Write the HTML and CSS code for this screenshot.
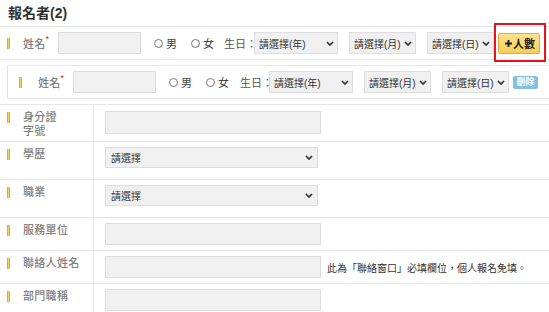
FILE: index.html
```html
<!DOCTYPE html>
<html lang="zh-Hant">
<head>
  <meta charset="UTF-8" />
  <title>報名者</title>
  <meta name="viewport" content="width=device-width, initial-scale=1.0" />
  <link rel="stylesheet" href="styles.css">
</head>
<body>

  <!-- 標題 -->
  <h2 class="section-title">報名者(2)</h2>

  <!-- 第一位報名者 -->
  <div class="person-row">
    <span class="bar"></span>
    <label class="person-label">姓名<em>*</em></label>
    <input class="text-input name-input" type="text">
    <span class="radio"><i></i>男</span>
    <span class="radio"><i></i>女</span>
    <span class="birth-label">生日：</span>
    <div class="fake-select sel-year">請選擇(年)<svg width="8" height="5" viewBox="0 0 8 5"><path d="M1 1 L4 4 L7 1" /></svg></div>
    <div class="fake-select sel-month">請選擇(月)<svg width="8" height="5" viewBox="0 0 8 5"><path d="M1 1 L4 4 L7 1" /></svg></div>
    <div class="fake-select sel-day">請選擇(日)<svg width="8" height="5" viewBox="0 0 8 5"><path d="M1 1 L4 4 L7 1" /></svg></div>
    <span class="add-wrap">
      <button class="add-btn" type="button"><svg width="7" height="7" viewBox="0 0 7 7"><path d="M3.5 0 V7 M0 3.5 H7" /></svg>人數</button>
      <span class="highlight-box"></span>
    </span>
  </div>

  <!-- 第二位報名者 -->
  <div class="person-row extra">
    <span class="bar"></span>
    <label class="person-label">姓名<em>*</em></label>
    <input class="text-input name-input" type="text">
    <span class="radio"><i></i>男</span>
    <span class="radio"><i></i>女</span>
    <span class="birth-label">生日：</span>
    <div class="fake-select sel-year">請選擇(年)<svg width="8" height="5" viewBox="0 0 8 5"><path d="M1 1 L4 4 L7 1" /></svg></div>
    <div class="fake-select sel-month">請選擇(月)<svg width="8" height="5" viewBox="0 0 8 5"><path d="M1 1 L4 4 L7 1" /></svg></div>
    <div class="fake-select sel-day">請選擇(日)<svg width="8" height="5" viewBox="0 0 8 5"><path d="M1 1 L4 4 L7 1" /></svg></div>
    <span class="del-badge">刪除</span>
  </div>

  <!-- 詳細資料 -->
  <div class="form-table">
    <div class="form-row tall">
      <div class="label-cell"><span class="bar"></span><span class="label-text">身分證<br>字號</span></div>
      <div class="field-cell"><input class="text-input wide-input" type="text"></div>
    </div>
    <div class="form-row select-row">
      <div class="label-cell"><span class="bar"></span><span class="label-text">學歷</span></div>
      <div class="field-cell">
        <div class="fake-select wide-select">請選擇<svg width="8" height="5" viewBox="0 0 8 5"><path d="M1 1 L4 4 L7 1" /></svg></div>
      </div>
    </div>
    <div class="form-row select-row">
      <div class="label-cell"><span class="bar"></span><span class="label-text">職業</span></div>
      <div class="field-cell">
        <div class="fake-select wide-select">請選擇<svg width="8" height="5" viewBox="0 0 8 5"><path d="M1 1 L4 4 L7 1" /></svg></div>
      </div>
    </div>
    <div class="form-row">
      <div class="label-cell"><span class="bar"></span><span class="label-text">服務單位</span></div>
      <div class="field-cell"><input class="text-input wide-input" type="text"></div>
    </div>
    <div class="form-row">
      <div class="label-cell"><span class="bar"></span><span class="label-text">聯絡人姓名</span></div>
      <div class="field-cell">
        <input class="text-input wide-input" type="text">
        <span class="note">此為「聯絡窗口」必填欄位，個人報名免填。</span>
      </div>
    </div>
    <div class="form-row">
      <div class="label-cell"><span class="bar"></span><span class="label-text">部門職稱</span></div>
      <div class="field-cell"><input class="text-input wide-input" type="text"></div>
    </div>
  </div>

</body>
</html>
```

FILE: styles.css
```css
body {
  margin: 0;
  font-family: "Liberation Sans", "Noto Sans CJK TC", sans-serif;
  color: #333;
  background-color: #fff;
}

.section-title {
  margin: 0;
  height: 26px;
  padding-left: 8px;
  font-size: 14px;
  line-height: 26px;
  font-weight: bold;
  color: #333;
}

/* 報名者列 */
.person-row {
  display: flex;
  align-items: center;
  height: 32px;
  padding-left: 7px;
  border-top: 1px solid #e8e8e8;
  border-bottom: 1px solid #e8e8e8;
}

.person-row.extra {
  margin: 5px 0 0 7px;
  padding-left: 11px;
  border-left: 1px solid #e3e3e3;
}

.bar {
  flex: none;
  width: 3px;
  height: 11px;
  background: linear-gradient(to right, #c99a1e, #f2d25a, #c99a1e);
}

.person-row .bar {
  margin-right: 13px;
}

.person-row.extra .bar {
  margin-right: 16px;
}

.person-label {
  width: 35px;
  flex: none;
  font-size: 11px;
  font-weight: 500;
  letter-spacing: 0.3px;
  color: #808080;
}

.person-label em {
  font-style: normal;
  color: #e0161e;
  font-size: 9px;
  vertical-align: top;
  position: relative;
  top: -1px;
}

.text-input {
  box-sizing: border-box;
  height: 22px;
  margin: 0;
  background-color: #f1f1f1;
  border: 1px solid #dcdcdc;
  border-radius: 0;
  padding: 0 4px;
}

.name-input {
  width: 83px;
  flex: none;
}

.radio {
  display: flex;
  align-items: center;
  gap: 3px;
  margin-left: 13px;
  font-size: 11px;
  color: #444;
}

.radio + .radio {
  margin-left: 14px;
}

.radio i {
  width: 7px;
  height: 7px;
  border: 1px solid #777;
  border-radius: 50%;
}

.birth-label {
  flex: none;
  width: 30px;
  margin-left: 10px;
  font-size: 11px;
  color: #555;
  white-space: nowrap;
}

.person-row.extra .birth-label {
  width: 29px;
  margin-left: 11px;
}

.fake-select {
  box-sizing: border-box;
  height: 22px;
  display: flex;
  align-items: center;
  justify-content: space-between;
  padding: 0 3px 0 4px;
  background-color: #f0f0f0;
  border: 1px solid #dedede;
  font-size: 10px;
  color: #333;
  white-space: nowrap;
}

.fake-select svg path {
  fill: none;
  stroke: #333;
  stroke-width: 1.7;
}

.sel-year {
  width: 84px;
}

.sel-month {
  width: 67px;
  margin-left: 11px;
}

.sel-day {
  width: 67px;
  margin-left: 11px;
}

.add-wrap {
  position: relative;
  margin-left: 4px;
}

.add-btn {
  display: flex;
  align-items: center;
  gap: 1px;
  width: 42px;
  height: 21px;
  padding: 0 0 0 2px;
  justify-content: center;
  background: linear-gradient(#fde28e, #f8cd58);
  border: 1px solid #eea53a;
  border-radius: 2px;
  font-family: inherit;
  font-size: 11px;
  font-weight: bold;
  color: #222;
}

.add-btn svg path {
  stroke: #222;
  stroke-width: 2;
}

/* 標示框 */
.highlight-box {
  position: absolute;
  top: -10px;
  left: -4px;
  right: -6px;
  bottom: -8px;
  border: 2px solid #e3141c;
}

.del-badge {
  margin-left: 4px;
  width: 25px;
  height: 13px;
  line-height: 13px;
  text-align: center;
  background-color: #80c0e2;
  border-radius: 2px;
  color: #fff;
  font-size: 9px;
  font-weight: bold;
}

/* 表格 */
.form-table {
  margin-top: 5px;
}

.form-row {
  display: flex;
  border-top: 1px solid #e6e6e6;
}

.label-cell {
  box-sizing: border-box;
  width: 94px;
  flex: none;
  display: flex;
  align-items: flex-start;
  padding: 5px 0 0 7px;
  border-right: 1px solid #e6e6e6;
}

.label-cell .bar {
  margin: 2px 13px 0 0;
}

.label-text {
  font-size: 11px;
  font-weight: 500;
  letter-spacing: 0.3px;
  line-height: 14px;
  color: #808080;
}

.field-cell {
  display: flex;
  align-items: center;
  padding: 5px 0 5px 11px;
  align-self: flex-start;
}

.form-row.tall .field-cell {
  padding: 6px 0 7px 11px;
}

.form-row.tall .text-input {
  height: 23px;
}

.form-row.select-row .field-cell {
  padding-bottom: 11px;
}

.wide-input {
  width: 216px;
}

.wide-select {
  width: 213px;
  padding: 0 4px 0 5px;
  height: 21px;
  font-size: 10px;
}

.note {
  margin-left: 6px;
  font-size: 10px;
  color: #333;
  white-space: nowrap;
}
```
